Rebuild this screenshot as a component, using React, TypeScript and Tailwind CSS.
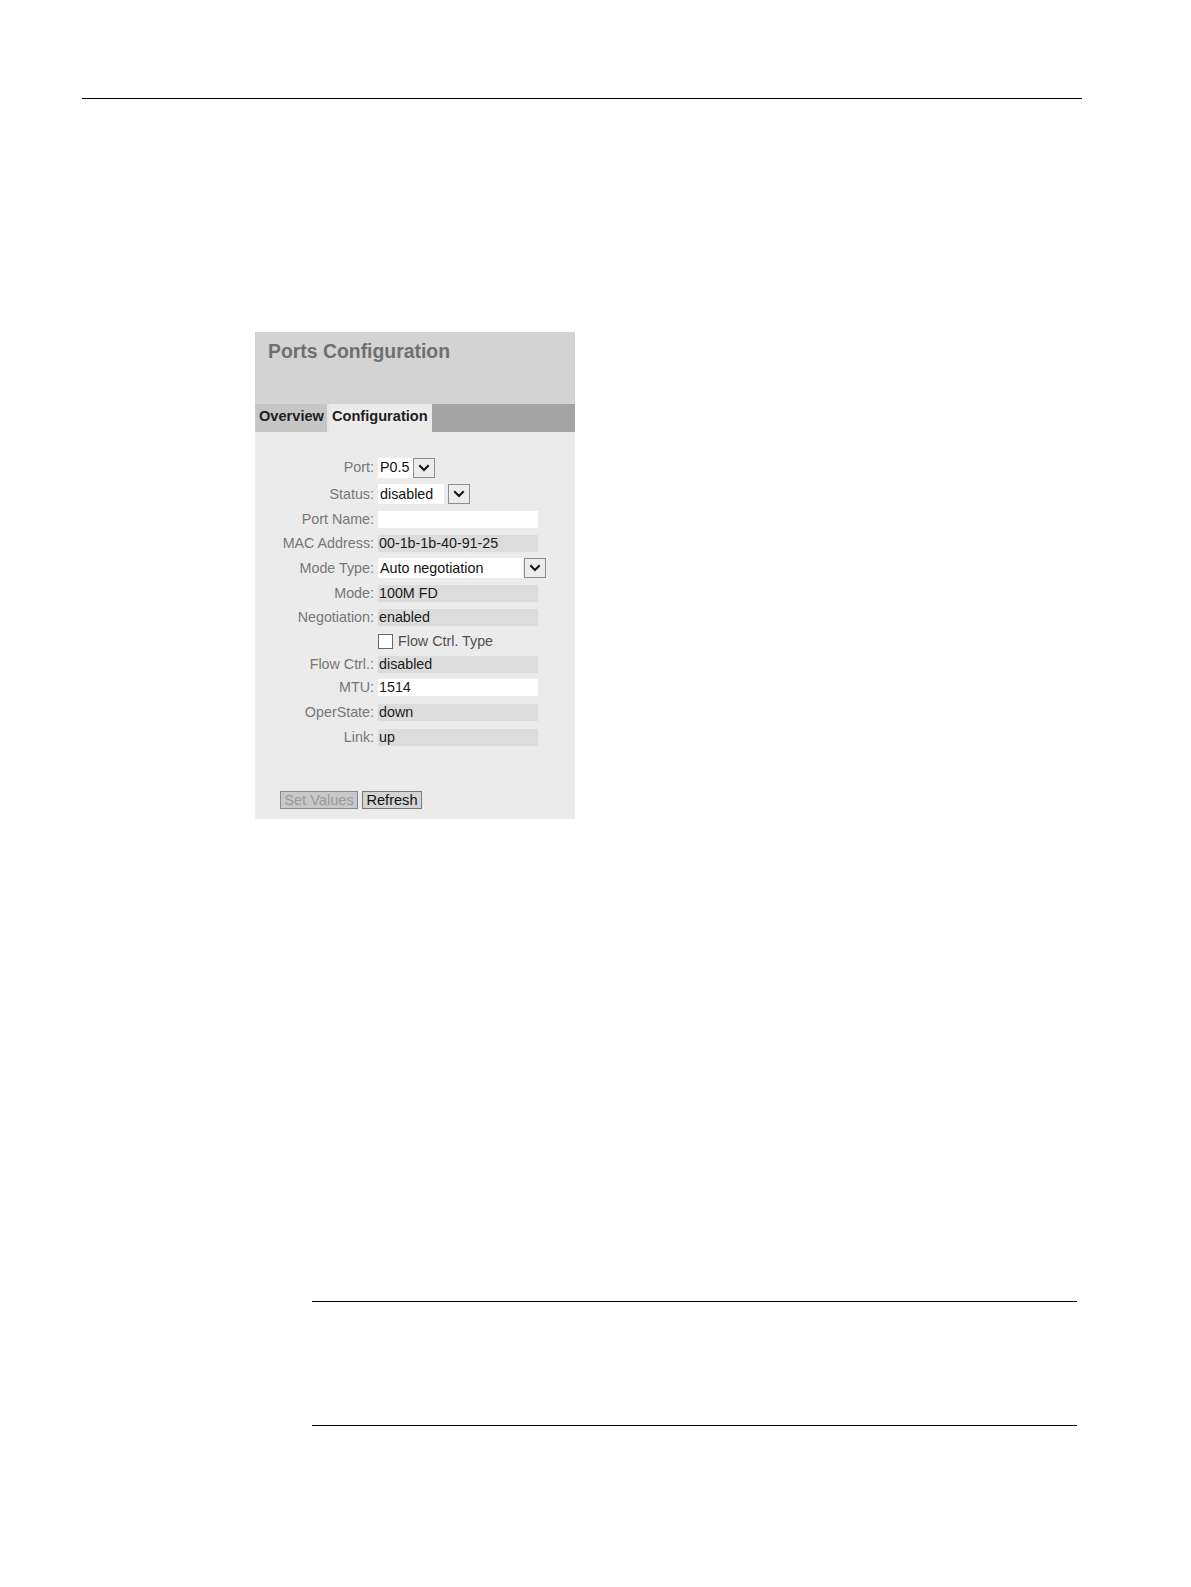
import type { ReactNode } from 'react'

const font = "font-['Liberation_Sans',Arial,sans-serif]"

function Chevron() {
  return (
    <svg className="h-[12px] w-[12px]" viewBox="0 0 12 12" fill="none">
      <path d="M2 4 L6 8 L10 4" stroke="#111" strokeWidth="2" strokeLinecap="square" />
    </svg>
  )
}

function SelectBox({ value, boxWidth, gap = 0 }: { value: string; boxWidth: number; gap?: number }) {
  return (
    <div className="flex h-[20px] items-center">
      <div className="flex h-[20px] items-center bg-white pl-[2px] text-[#111]" style={{ width: boxWidth, marginRight: gap }}>
        {value}
      </div>
      <div className="grid h-[20px] w-[22px] place-items-center border border-[#8c8c8c] bg-[#ececec]">
        <Chevron />
      </div>
    </div>
  )
}

function Row({ label, h, children }: { label: string; h: string; children?: ReactNode }) {
  return (
    <div className={`flex items-center ${h}`}>
      <div className="w-[119px] shrink-0 text-right text-[#767676]">{label}</div>
      <div className="ml-[4px] flex items-center">{children}</div>
    </div>
  )
}

function ReadOnly({ value }: { value: string }) {
  return <div className="flex h-[17px] w-[160px] items-center bg-[#dcdcdc] pl-[1px] text-[#1a1a1a]">{value}</div>
}

function TextInput({ value }: { value: string }) {
  return <div className="flex h-[17px] w-[160px] items-center bg-white pl-[1px] text-[#1a1a1a]">{value}</div>
}

function PortsPanel() {
  return (
    <div className={`w-[320px] text-[14.3px] leading-none ${font}`}>
      <div className="h-[72px] bg-[#d3d3d3] pl-[13px] pt-[8px]">
        <h1 className="text-[19.4px] font-bold leading-[22px] text-[#6f6f6f]">Ports Configuration</h1>
      </div>
      <div className="flex h-[28px] bg-[#a4a4a4] text-[14.6px] font-bold text-[#1e1e1e]">
        <div className="w-[72px] bg-[#c6c6c6] pl-[4px] pt-[5px]">Overview</div>
        <div className="w-[2px] bg-[#e4e4e4]" />
        <div className="w-[103px] bg-[#ebebeb] pl-[3px] pt-[5px]">Configuration</div>
      </div>
      <div className="bg-[#ebebeb] pb-[10px] pt-[22.5px]">
        <Row label="Port:" h="h-[26px]">
          <SelectBox value="P0.5" boxWidth={35} />
        </Row>
        <Row label="Status:" h="h-[27px]">
          <SelectBox value="disabled" boxWidth={66} gap={4} />
        </Row>
        <Row label="Port Name:" h="h-[24px]">
          <TextInput value="" />
        </Row>
        <Row label="MAC Address:" h="h-[24px]">
          <ReadOnly value="00-1b-1b-40-91-25" />
        </Row>
        <Row label="Mode Type:" h="h-[25px]">
          <SelectBox value="Auto negotiation" boxWidth={145} gap={1} />
        </Row>
        <Row label="Mode:" h="h-[25px]">
          <ReadOnly value="100M FD" />
        </Row>
        <Row label="Negotiation:" h="h-[24px]">
          <ReadOnly value="enabled" />
        </Row>
        <Row label="" h="h-[23px]">
          <div className="flex items-center gap-[5px]">
            <span className="h-[15px] w-[15px] border border-[#666] bg-white" />
            <span className="text-[#505050]">Flow Ctrl. Type</span>
          </div>
        </Row>
        <Row label="Flow Ctrl.:" h="h-[23px]">
          <ReadOnly value="disabled" />
        </Row>
        <Row label="MTU:" h="h-[24px]">
          <TextInput value="1514" />
        </Row>
        <Row label="OperState:" h="h-[25px]">
          <ReadOnly value="down" />
        </Row>
        <Row label="Link:" h="h-[25px]">
          <ReadOnly value="up" />
        </Row>
        <div className="ml-[25px] mt-[41.5px] flex gap-[4px]">
          <button
            type="button"
            disabled
            className="h-[18px] w-[78px] border border-[#8a8a8a] bg-[#c8c8c8] text-[14.6px] leading-none text-[#9a9a9a]"
          >
            Set Values
          </button>
          <button
            type="button"
            className="h-[18px] w-[60px] border border-[#777] bg-[#d4d4d4] text-[14.6px] leading-none text-[#111]"
          >
            Refresh
          </button>
        </div>
      </div>
    </div>
  )
}

export default function App() {
  return (
    <div className={`h-[1587px] w-[1191px] bg-white ${font}`}>
      <div className="pl-[82px] pt-[98px]">
        <div className="h-px w-[1000px] bg-black" />
      </div>
      <div className="ml-[255px] mt-[233px]">
        <PortsPanel />
      </div>
      <div className="ml-[312px] mt-[482px]">
        <div className="h-px w-[765px] bg-black" />
        <div className="mt-[123px] h-px w-[765px] bg-black" />
      </div>
    </div>
  )
}
